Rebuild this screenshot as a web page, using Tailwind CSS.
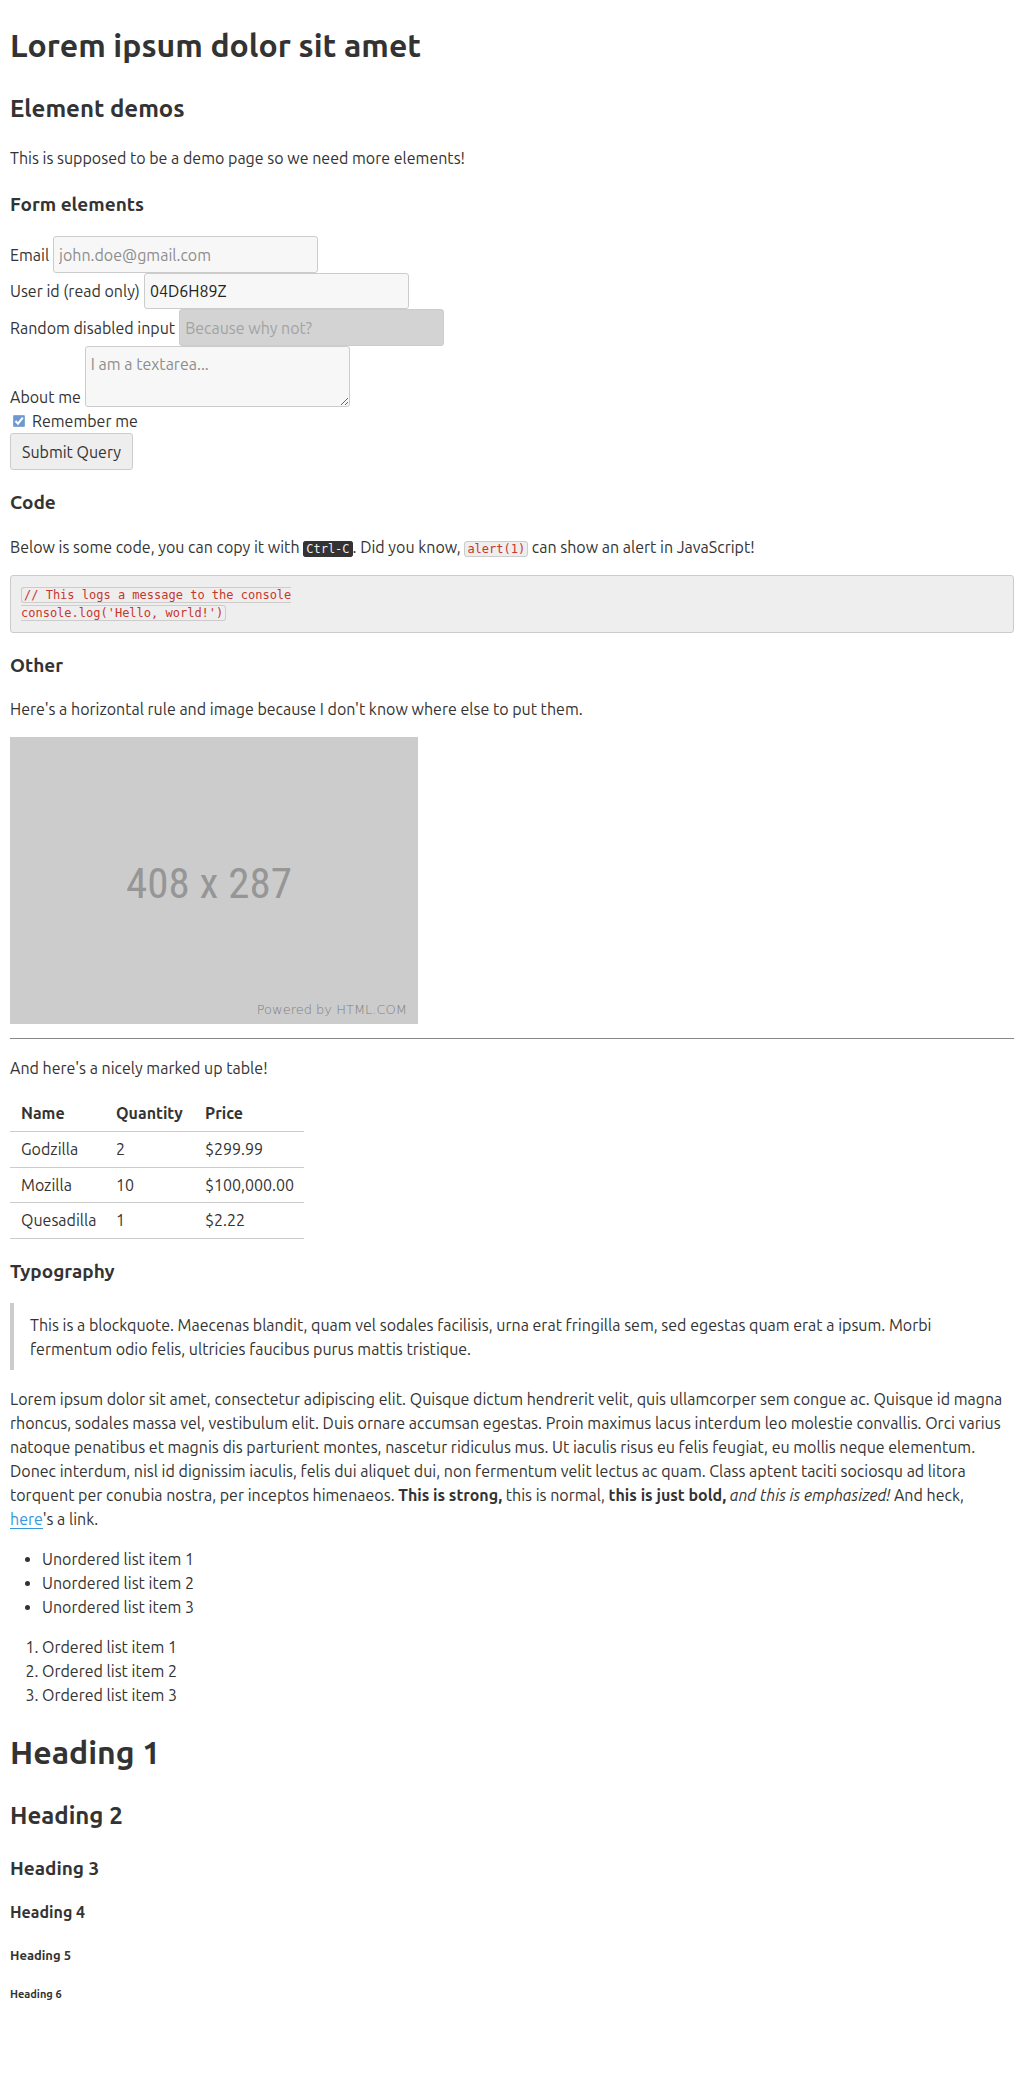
<!DOCTYPE html>
<html lang="en">
<head>
<meta charset="utf-8">
<meta name="viewport" content="width=device-width, initial-scale=1">
<title>Lorem ipsum dolor sit amet</title>
<script src="https://cdn.jsdelivr.net/npm/@tailwindcss/browser@4"></script>
</head>
<body class="bg-white px-[10px] pt-[21px] pb-20 font-[Ubuntu,'Noto_Sans',sans-serif] text-base leading-6 text-[#333]">
<h1 class="text-[32px] leading-12 font-bold">Lorem ipsum dolor sit amet</h1>
<h2 class="mt-[22px] text-2xl leading-9 font-bold">Element demos</h2>
<p class="mt-[19px]">This is supposed to be a demo page so we need more elements!</p>
<h3 class="mt-5 text-[19px] leading-7 font-bold">Form elements</h3>

<form class="mt-[18px]">
  <div class="flex items-center gap-1">
    <label for="email">Email</label>
    <input id="email" type="email" placeholder="john.doe@gmail.com" class="h-[37px] w-[265px] rounded-[3px] border border-[#ccc] bg-[#f7f7f7] px-[5px] placeholder:text-[#8e8e8e]">
  </div>
  <div class="flex items-center gap-1">
    <label for="uid">User id (read only)</label>
    <input id="uid" type="text" readonly value="04D6H89Z" class="h-9 w-[265px] rounded-[3px] border border-[#ccc] bg-[#f7f7f7] px-[5px] text-[#222]">
  </div>
  <div class="flex items-center gap-1">
    <label for="random">Random disabled input</label>
    <input id="random" type="text" disabled placeholder="Because why not?" class="h-[37px] w-[265px] rounded-[3px] border border-[#ccc] bg-[#d3d3d3] px-[5px] placeholder:text-[#a3a3a3]">
  </div>
  <div class="flex items-end gap-1">
    <label for="about">About me</label>
    <textarea id="about" rows="2" placeholder="I am a textarea..." class="mb-[2px] h-[61px] w-[265px] resize rounded-[3px] border border-[#ccc] bg-[#f7f7f7] px-[5px] py-[5px] placeholder:text-[#8e8e8e]"></textarea>
  </div>
  <div class="flex items-center gap-[7px] pl-[3px]">
    <span class="relative flex size-3">
      <input id="remember" type="checkbox" checked class="size-3 appearance-none rounded-[1px] border border-[#86a9d3] bg-[#6c9ad0]">
      <svg class="pointer-events-none absolute inset-0 size-3" viewBox="0 0 12 12" fill="none" stroke="#fff" stroke-width="2" aria-hidden="true"><path d="M2.5 6 5 8.7 9.8 2.6"/></svg>
    </span>
    <label for="remember">Remember me</label>
  </div>
  <button type="submit" class="h-[37px] rounded-[3px] border border-[#ccc] bg-[#eee] px-[11px]">Submit Query</button>
</form>

<h3 class="mt-[18px] text-[19px] leading-7 font-bold">Code</h3>
<p class="mt-[19px]">Below is some code, you can copy it with <kbd class="rounded-[3px] border border-[#333] bg-[#333] px-[2px] font-['DejaVu_Sans_Mono',monospace] text-xs text-[#eee]">Ctrl-C</kbd>. Did you know, <code class="rounded-[3px] border border-[#ccc] bg-[#eee] px-[2px] font-['DejaVu_Sans_Mono',monospace] text-xs text-[#c7372d]">alert(1)</code> can show an alert in JavaScript!</p>
<pre class="mt-4 rounded-[3px] border border-[#ccc] bg-[#eee] px-[10px] py-[10px] font-['DejaVu_Sans_Mono',monospace] text-xs leading-[18px]"><code class="rounded-[3px] border border-[#ccc] px-[2px] font-['DejaVu_Sans_Mono',monospace] text-xs leading-[18px] text-[#c7372d]">// This logs a message to the console
console.log('Hello, world!')</code></pre>

<h3 class="mt-[18px] text-[19px] leading-7 font-bold">Other</h3>
<p class="mt-[18px]">Here's a horizontal rule and image because I don't know where else to put them.</p>
<svg class="mt-4 h-[287px] w-[408px]" viewBox="0 0 408 287" role="img" aria-label="408 x 287 placeholder">
  <rect width="408" height="287" fill="#ccc"/>
  <text x="199" y="161" text-anchor="middle" font-family="'Roboto Condensed','Liberation Sans',sans-serif" font-size="43" fill="#969696">408 x 287</text>
  <text x="397" y="277" text-anchor="end" font-family="'DejaVu Sans',sans-serif" font-size="13" font-weight="200" fill="#808080">Powered by HTML.COM</text>
</svg>
<hr class="mt-[14px] border-t border-[#888]">
<p class="mt-[17px]">And here's a nicely marked up table!</p>

<table class="mt-4 w-[294px] table-fixed border-collapse text-left">
  <thead>
    <tr class="h-[35px] border-b border-[#ccc]"><th class="w-[95px] px-[11px] font-bold">Name</th><th class="w-[89px] px-[11px] font-bold">Quantity</th><th class="px-[11px] font-bold">Price</th></tr>
  </thead>
  <tbody>
    <tr class="h-9 border-b border-[#ccc]"><td class="px-[11px]">Godzilla</td><td class="px-[11px]">2</td><td class="px-[11px]">$299.99</td></tr>
    <tr class="h-[35px] border-b border-[#ccc]"><td class="px-[11px]">Mozilla</td><td class="px-[11px]">10</td><td class="px-[11px]">$100,000.00</td></tr>
    <tr class="h-9 border-b border-[#ccc]"><td class="px-[11px]">Quesadilla</td><td class="px-[11px]">1</td><td class="px-[11px]">$2.22</td></tr>
  </tbody>
</table>

<h3 class="mt-[18px] text-[19px] leading-7 font-bold">Typography</h3>
<blockquote class="mt-[18px] border-l-4 border-[#ccc] pt-[10px] pr-5 pb-[9px] pl-4">This is a blockquote. Maecenas blandit, quam vel sodales facilisis, urna erat fringilla sem, sed egestas quam erat a ipsum. Morbi fermentum odio felis, ultricies faucibus purus mattis tristique.</blockquote>
<p class="mt-[17px] pr-2">Lorem ipsum dolor sit amet, consectetur adipiscing elit. Quisque dictum hendrerit velit, quis ullamcorper sem congue ac. Quisque id magna rhoncus, sodales massa vel, vestibulum elit. Duis ornare accumsan egestas. Proin maximus lacus interdum leo molestie convallis. Orci varius natoque penatibus et magnis dis parturient montes, nascetur ridiculus mus. Ut iaculis risus eu felis feugiat, eu mollis neque elementum. Donec interdum, nisl id dignissim iaculis, felis dui aliquet dui, non fermentum velit lectus ac quam. Class aptent taciti sociosqu ad litora torquent per conubia nostra, per inceptos himenaeos. <strong class="font-bold">This is strong,</strong> this is normal, <b class="font-bold">this is just bold,</b> <em>and this is emphasized!</em> And heck, <a href="#" class="border-b border-[#3498db] text-[#3498db]">here</a>'s a link.</p>
<ul class="mt-4 list-disc pl-8">
  <li>Unordered list item 1</li>
  <li>Unordered list item 2</li>
  <li>Unordered list item 3</li>
</ul>
<ol class="mt-4 list-decimal pl-8">
  <li>Ordered list item 1</li>
  <li>Ordered list item 2</li>
  <li>Ordered list item 3</li>
</ol>

<h1 class="mt-[21px] text-[32px] leading-12 font-bold">Heading 1</h1>
<h2 class="mt-[22px] text-2xl leading-9 font-bold">Heading 2</h2>
<h3 class="mt-5 text-[19px] leading-7 font-bold">Heading 3</h3>
<h4 class="mt-[18px] leading-6 font-bold">Heading 4</h4>
<h5 class="mt-[21px] text-[13px] leading-5 font-bold">Heading 5</h5>
<h6 class="mt-[21px] text-[11px] leading-4 font-bold">Heading 6</h6>
</body>
</html>
